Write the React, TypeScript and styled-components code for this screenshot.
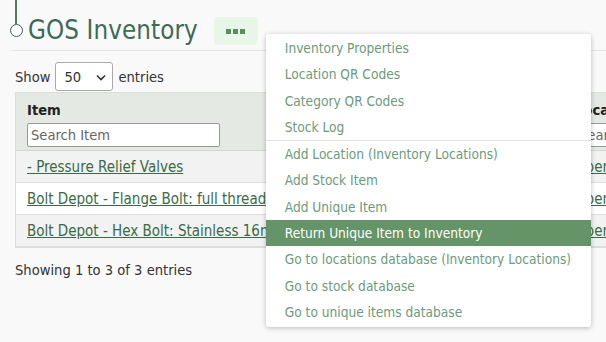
import React from "react";
import styled, { createGlobalStyle } from "styled-components";

const GlobalStyle = createGlobalStyle`
  html, body { margin: 0; padding: 0; }
  body {
    background: #f9f9f9;
    font-family: "DejaVu Sans Condensed", "Noto Sans", sans-serif;
    color: #333;
    overflow: hidden;
    width: 606px;
    height: 342px;
  }
`;

const Page = styled.div`
  position: relative;
  padding-left: 12px;
  width: 900px;
`;

const Header = styled.div`
  display: flex;
  align-items: flex-start;
  height: 51px;
  border-bottom: 1px solid #e4e4e4;
  box-sizing: border-box;
`;

const Marker = styled.div`
  display: flex;
  flex-direction: column;
  align-items: center;
  width: 14px;
  margin-left: -3px;
`;

const Stem = styled.div`
  width: 2px;
  height: 24px;
  background: #4f7a5c;
`;

const Dot = styled.div`
  width: 11px;
  height: 11px;
  border: 1.5px solid #3d5f55;
  border-radius: 50%;
  background: #fff;
`;

const Title = styled.h1`
  margin: 14px 0 0 5px;
  font-size: 25.7px;
  font-weight: normal;
  color: #3e6a58;
  line-height: 32px;
  letter-spacing: 0.1px;
`;

const MenuWrap = styled.div`
  position: relative;
  margin: 17px 0 0 16px;
`;

const DotsButton = styled.button`
  width: 44px;
  height: 28px;
  border: none;
  border-radius: 5px;
  background: #e8f5e9;
  display: flex;
  align-items: center;
  justify-content: center;
  gap: 2px;
  padding: 0;
`;

const Square = styled.span`
  width: 5px;
  height: 5px;
  background: #5b8c5e;
`;

const Menu = styled.ul`
  position: absolute;
  left: 52px;
  top: 17px;
  width: 325px;
  margin: 0;
  padding: 1px 0 2px;
  list-style: none;
  background: #fff;
  border-radius: 3px;
  box-shadow: 0 1px 5px rgba(0, 0, 0, 0.25);
  z-index: 10;
`;

const MenuItem = styled.li<{ $active?: boolean }>`
  height: 26.3px;
  line-height: 27px;
  padding-left: 19px;
  font-size: 13.6px;
  color: ${(p) => (p.$active ? "#fff" : "#6c9a7c")};
  background: ${(p) => (p.$active ? "#649468" : "transparent")};
`;

const MenuDivider = styled.li`
  height: 1px;
  background: #e2e2e2;
  margin: 0;
`;

const Controls = styled.div`
  display: flex;
  align-items: center;
  gap: 5px;
  padding: 11px 0 1px 3px;
  font-size: 14.6px;
  color: #333;
`;

const SelectBox = styled.div`
  width: 58px;
  height: 29px;
  border: 1px solid #aaa;
  border-radius: 3px;
  background: #fff;
  display: flex;
  align-items: center;
  justify-content: space-between;
  padding: 0 5px 0 8px;
  box-sizing: border-box;
  font-size: 14.6px;
`;

const Table = styled.div`
  margin-left: 3px;
  border: 1px solid #dcdcdc;
  display: grid;
  grid-template-columns: 548px 300px;
`;

const HeadCell = styled.div`
  background: #e4e9e3;
  height: 58px;
  padding: 9px 0 0 11px;
  box-sizing: border-box;
  border-bottom: 1px solid #d4d4d4;
`;

const HeadLabel = styled.div`
  font-weight: bold;
  font-size: 14.6px;
  color: #222;
  line-height: 16px;
`;

const SearchInput = styled.div`
  margin-top: 5px;
  width: 193px;
  height: 24px;
  border: 1px solid #999;
  border-radius: 2px;
  background: #fff;
  box-sizing: border-box;
  padding-left: 3px;
  font-size: 14.6px;
  line-height: 22px;
  color: #666;
`;

const Cell = styled.div<{ $alt?: boolean }>`
  height: 32px;
  box-sizing: border-box;
  border-bottom: 1px solid #dedede;
  background: ${(p) => (p.$alt ? "#f2f2f2" : "#fff")};
  padding-left: 11px;
  display: flex;
  align-items: center;
  white-space: nowrap;
  overflow: hidden;
`;

const ItemLink = styled.a`
  color: #3b6a46;
  text-decoration: underline;
  font-size: 15px;
`;

const Footer = styled.div`
  padding: 13px 0 0 3px;
  font-size: 14.6px;
  color: #333;
`;

const rows = [
  { name: "- Pressure Relief Valves", loc: "Open" },
  { name: "Bolt Depot - Flange Bolt: full thread", loc: "Open" },
  { name: "Bolt Depot - Hex Bolt: Stainless 16mm", loc: "Open" },
];

const menuTop = ["Inventory Properties", "Location QR Codes", "Category QR Codes", "Stock Log"];
const menuBottom = [
  "Add Location (Inventory Locations)",
  "Add Stock Item",
  "Add Unique Item",
  "Return Unique Item to Inventory",
  "Go to locations database (Inventory Locations)",
  "Go to stock database",
  "Go to unique items database",
];

export default function App() {
  return (
    <>
      <GlobalStyle />
      <Page>
        <Header>
          <Marker>
            <Stem />
            <Dot />
          </Marker>
          <Title>GOS Inventory</Title>
          <MenuWrap>
            <DotsButton>
              <Square />
              <Square />
              <Square />
            </DotsButton>
            <Menu>
              {menuTop.map((m) => (
                <MenuItem key={m}>{m}</MenuItem>
              ))}
              <MenuDivider />
              {menuBottom.map((m) => (
                <MenuItem key={m} $active={m === "Return Unique Item to Inventory"}>
                  {m}
                </MenuItem>
              ))}
            </Menu>
          </MenuWrap>
        </Header>
        <Controls>
          <span>Show</span>
          <SelectBox>
            <span>50</span>
            <svg width="12" height="12" viewBox="0 0 12 12">
              <path d="M2 4.5 L6 8.5 L10 4.5" fill="none" stroke="#333" strokeWidth="1.6" />
            </svg>
          </SelectBox>
          <span>entries</span>
        </Controls>
        <Table>
          <HeadCell>
            <HeadLabel>Item</HeadLabel>
            <SearchInput>Search Item</SearchInput>
          </HeadCell>
          <HeadCell>
            <HeadLabel>Location</HeadLabel>
            <SearchInput>Search Location</SearchInput>
          </HeadCell>
          {rows.map((r, i) => (
            <React.Fragment key={r.name}>
              <Cell $alt={i % 2 === 0}>
                <ItemLink>{r.name}</ItemLink>
              </Cell>
              <Cell $alt={i % 2 === 0}>
                <ItemLink>{r.loc}</ItemLink>
              </Cell>
            </React.Fragment>
          ))}
        </Table>
        <Footer>Showing 1 to 3 of 3 entries</Footer>
      </Page>
    </>
  );
}
